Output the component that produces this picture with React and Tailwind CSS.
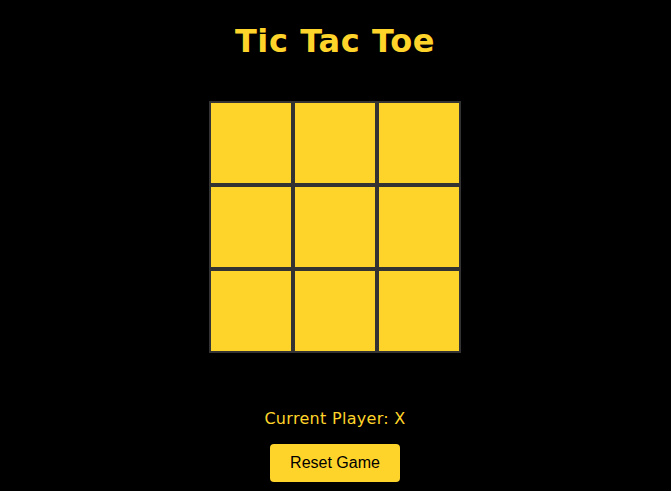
import React, { useState } from "react";

const App = () => {
  const [board, setBoard] = useState(Array(9).fill(null));
  const [player, setPlayer] = useState("X");

  const play = (i) => {
    if (board[i]) return;
    const next = [...board];
    next[i] = player;
    setBoard(next);
    setPlayer(player === "X" ? "O" : "X");
  };

  const reset = () => {
    setBoard(Array(9).fill(null));
    setPlayer("X");
  };

  return (
    <div className="min-h-[491px] w-full pr-px bg-black flex flex-col items-center font-['DejaVu_Sans',Verdana,sans-serif]">
      {/* Title */}
      <h1 className="mt-[21px] text-[32px] leading-[40px] tracking-[0.6px] font-bold text-[#ffd42a]">
        Tic Tac Toe
      </h1>

      {/* Board */}
      <div className="mt-[40px] grid grid-cols-3">
        {board.map((cell, i) => (
          <button
            key={i}
            onClick={() => play(i)}
            className="w-[84px] h-[84px] border-2 border-[#333] bg-[#ffd42a] text-4xl font-bold text-black"
          >
            {cell}
          </button>
        ))}
      </div>

      <p className="mt-[56px] text-base leading-5 tracking-[0.3px] text-[#ffd42a]">Current Player: {player}</p>

      <button
        onClick={reset}
        className="mt-[15px] w-[130px] h-[38px] rounded bg-[#ffd42a] text-black text-base font-['Liberation_Sans',Arial,sans-serif]"
      >
        Reset Game
      </button>
    </div>
  );
};

export default App;
